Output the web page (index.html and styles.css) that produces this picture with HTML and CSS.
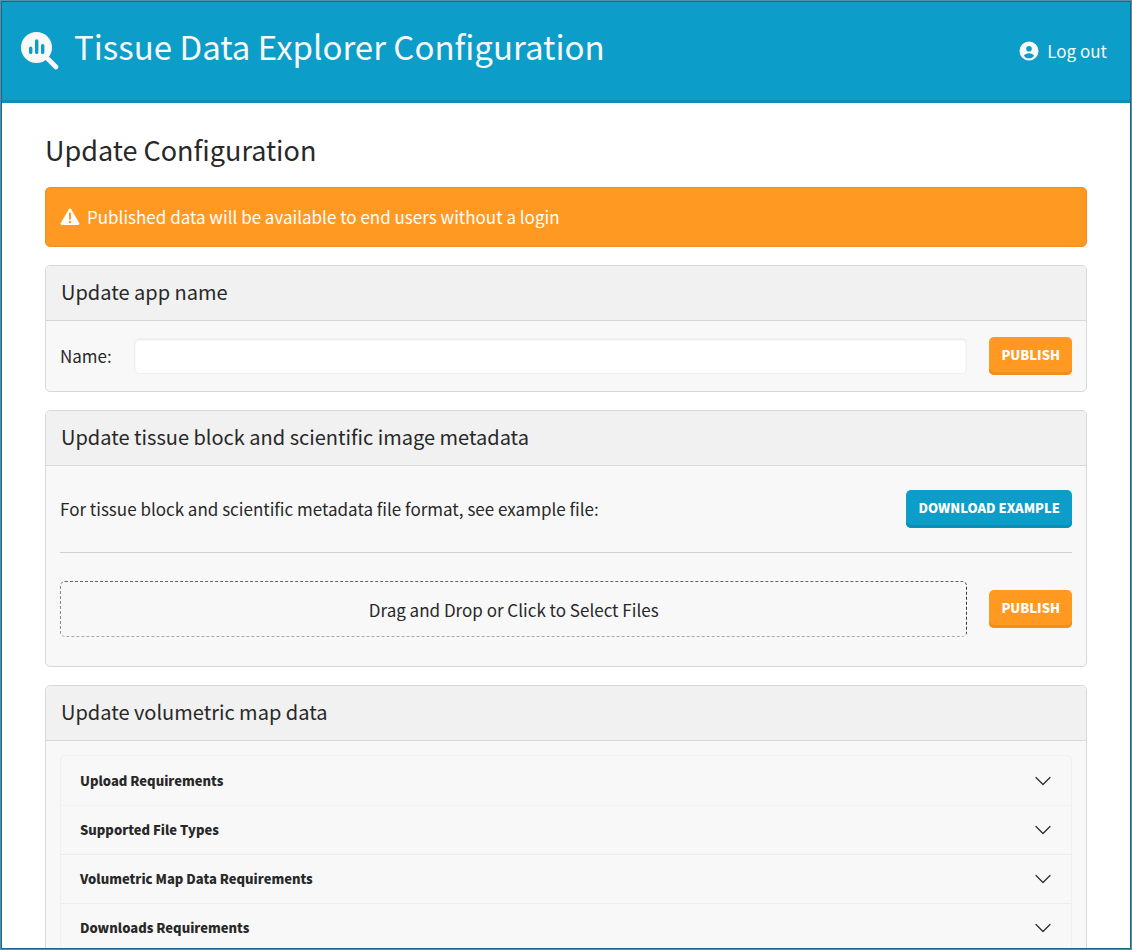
FILE: index.html
```html
<!DOCTYPE html>
<html lang="en">
<head>
<meta charset="utf-8">
<meta name="viewport" content="width=device-width, initial-scale=1">
<title>Tissue Data Explorer Configuration</title>
<link rel="stylesheet" href="styles.css">
</head>
<body>
<div class="app">
  <header class="topbar">
    <svg class="logo" viewBox="0 0 38 38" aria-hidden="true">
      <path d="M25 25L35 35" stroke="currentColor" stroke-width="4.600" stroke-linecap="round"/>
      <circle cx="15.500" cy="15.500" r="15.500" fill="currentColor"/>
      <path class="logo-bars" d="M9.700 16.200v4.200M15.700 8.900v11.500M21.700 13.700v6.700" fill="none" stroke-width="3.400" stroke-linecap="round"/>
    </svg>
    <h1 class="brand">Tissue Data Explorer Configuration</h1>
    <a class="logout" href="#">
      <svg class="user" viewBox="0 0 20 20" aria-hidden="true">
        <path fill="currentColor" fill-rule="evenodd" d="M10 .5a9.500 9.500 0 1 0 0 19 9.500 9.500 0 0 0 0-19ZM10 5a2.800 2.800 0 1 1 0 5.600A2.800 2.800 0 0 1 10 5ZM4.900 14.700c.9-1.600 2.800-2.500 5.100-2.500s4.200.9 5.100 2.500C14 16.400 12.100 17.300 10 17.300S6 16.400 4.900 14.700Z"/>
      </svg>
      <span>Log out</span>
    </a>
  </header>

  <main class="content">
    <h2 class="page-title">Update Configuration</h2>

    <div class="alert" role="alert">
      <svg class="warn" viewBox="0 0 20 18" aria-hidden="true">
        <path fill="currentColor" fill-rule="evenodd" d="M8.800 1.200a1.400 1.400 0 0 1 2.400 0l8 13.800a1.300 1.300 0 0 1-1.200 2H2a1.300 1.300 0 0 1-1.200-2ZM9 5.600v5.200a1 1 0 0 0 2 0V5.600a1 1 0 0 0-2 0ZM10 12.700a1.250 1.250 0 1 0 0 2.500 1.250 1.250 0 0 0 0-2.500Z"/>
      </svg>
      <span>Published data will be available to end users without a login</span>
    </div>

    <section class="card">
      <h3 class="card-header">Update app name</h3>
      <form class="card-body compact row">
        <label class="label" for="app-name">Name:</label>
        <input class="input" id="app-name" type="text">
        <button class="btn btn-warning" type="button">Publish</button>
      </form>
    </section>

    <section class="card">
      <h3 class="card-header">Update tissue block and scientific image metadata</h3>
      <div class="card-body spacious">
        <div class="row spread">
          <p class="text">For tissue block and scientific metadata file format, see example file:</p>
          <button class="btn btn-primary" type="button">Download example</button>
        </div>
        <hr class="rule">
        <div class="row">
          <button class="dropzone" type="button">Drag and Drop or Click to Select Files</button>
          <button class="btn btn-warning" type="button">Publish</button>
        </div>
      </div>
    </section>

    <section class="card">
      <h3 class="card-header">Update volumetric map data</h3>
      <div class="card-body">
        <div class="accordion">
          <button class="accordion-item" type="button" aria-expanded="false">Upload Requirements
            <svg class="chevron" viewBox="0 0 16 16" aria-hidden="true"><path d="M1 4.500l7 7 7-7"/></svg></button>
          <button class="accordion-item" type="button" aria-expanded="false">Supported File Types
            <svg class="chevron" viewBox="0 0 16 16" aria-hidden="true"><path d="M1 4.500l7 7 7-7"/></svg></button>
          <button class="accordion-item" type="button" aria-expanded="false">Volumetric Map Data Requirements
            <svg class="chevron" viewBox="0 0 16 16" aria-hidden="true"><path d="M1 4.500l7 7 7-7"/></svg></button>
          <button class="accordion-item" type="button" aria-expanded="false">Downloads Requirements
            <svg class="chevron" viewBox="0 0 16 16" aria-hidden="true"><path d="M1 4.500l7 7 7-7"/></svg></button>
        </div>
      </div>
    </section>
  </main>
</div>
</body>
</html>
```
FILE: styles.css
```css
* {
  box-sizing: border-box;
}

body {
  margin: 0;
  border: 1px solid #5590a8;
  background: #fff;
  color: #282828;
  font-family: "Noto Sans CJK SC", "Noto Sans", sans-serif;
  font-size: 17px;
  line-height: 24px;
}

button,
input {
  margin: 0;
  color: inherit;
  font: inherit;
}

h1,
h2,
h3,
p {
  margin: 0;
  font-weight: 400;
}

.app {
  height: calc(100vh - 2px);
  border: 1px solid #1c6789;
  overflow-y: auto;
  scrollbar-width: none;
}

.topbar {
  display: flex;
  align-items: center;
  padding: 20px 23px 21px 19px;
  border-bottom: 3px solid #0a91b8;
  background: #0c9dc8;
  color: #f8f8f8;
}

.logo {
  flex: none;
  width: 38px;
  height: 38px;
  margin-right: 15px;
}

.logo-bars {
  stroke: #0c9dc8;
}

.brand {
  flex: 1;
  padding-bottom: 8px;
  font-size: 33px;
  line-height: 49px;
}

.logout {
  display: flex;
  align-items: center;
  gap: 8px;
  color: inherit;
  text-decoration: none;
}

.user {
  width: 20px;
  height: 20px;
}

.content {
  padding: 29px 43px;
}

.page-title {
  margin-bottom: 20px;
  font-size: 27px;
  line-height: 35px;
}

.alert {
  display: flex;
  align-items: center;
  gap: 7px;
  margin-bottom: 18px;
  padding: 17px 14px;
  border: 1px solid #f08f1c;
  border-radius: 5px;
  background: #ff9921;
  color: #fff;
}

.warn {
  width: 20px;
  height: 18px;
}

.card {
  margin-bottom: 18px;
  border: 1px solid #d8d8d8;
  border-radius: 5px;
  background: #f8f8f8;
}

.card-header {
  padding: 11px 15px 13px;
  border-bottom: 1px solid #d8d8d8;
  border-radius: 4px 4px 0 0;
  background: #f1f1f1;
  font-size: 20px;
  line-height: 30px;
}

.card-body {
  padding: 14px;
}

.card-body.compact {
  padding: 16px 14px;
}

.card-body.spacious {
  padding: 24px 14px 29px;
}

.row {
  display: flex;
  align-items: center;
  gap: 22px;
}

.spread {
  justify-content: space-between;
}

.input {
  flex: 1;
  min-width: 0;
  height: 36px;
  padding: 5px 12px;
  border: 1px solid #f0f0f0;
  border-radius: 5px;
  background: #fff;
  box-shadow: inset 0 1px 2px #e8e8e8;
}

.btn {
  flex: none;
  padding: 6px 12px 9px;
  border: 0;
  border-radius: 5px;
  color: #fff;
  font-size: 13px;
  font-weight: 900;
  line-height: 23px;
  text-transform: uppercase;
}

.btn-warning {
  background: #ff9921;
  box-shadow: inset 0 -3px #f08f1c;
}

.btn-primary {
  background: #0c9dc8;
  box-shadow: inset 0 -3px #0a8fb6;
}

.rule {
  margin: 24px 0 28px;
  border: 0;
  border-top: 1px solid #d0d0d0;
}

.dropzone {
  flex: 1;
  height: 56px;
  padding: 2px 12px 0;
  border: 1px dashed;
  border-color: #666 #333 #aaa #888;
  border-radius: 5px;
  background: transparent;
}

.accordion {
  padding-top: 1px;
  border: 1px solid #f0f0f0;
  border-radius: 5px;
}

.accordion-item {
  display: flex;
  align-items: center;
  justify-content: space-between;
  width: 100%;
  padding: 12px 20px 12px 19px;
  border: 0;
  border-bottom: 1px solid #ececec;
  background: transparent;
  font-size: 13px;
  font-weight: 900;
  text-align: left;
}

.accordion-item:first-child {
  border-bottom-color: #f2f2f2;
}

.accordion-item:last-child {
  border-bottom: 0;
}

.chevron {
  width: 16px;
  height: 16px;
  fill: none;
  stroke: #282828;
  stroke-width: 1.2;
  stroke-linecap: round;
  stroke-linejoin: round;
}
```
